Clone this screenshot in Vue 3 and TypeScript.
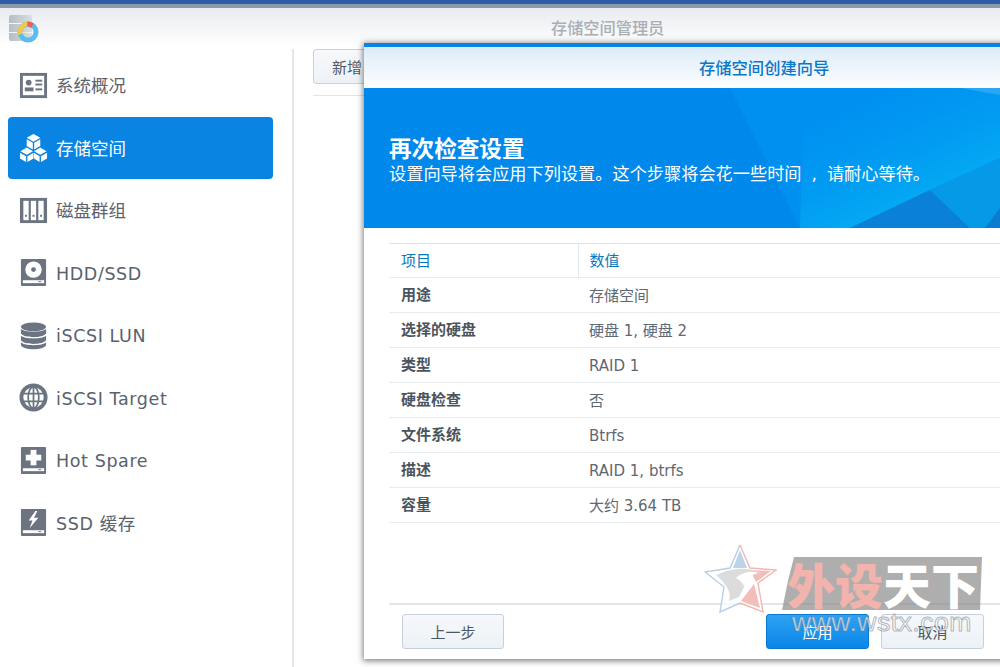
<script setup lang="ts">
const navItems: { label: string; icon: string; active?: boolean }[] = [
  { label: '系统概况', icon: 'card' },
  { label: '存储空间', icon: 'cubes', active: true },
  { label: '磁盘群组', icon: 'group' },
  { label: 'HDD/SSD', icon: 'disk' },
  { label: 'iSCSI LUN', icon: 'db' },
  { label: 'iSCSI Target', icon: 'globe' },
  { label: 'Hot Spare', icon: 'plus' },
  { label: 'SSD 缓存', icon: 'bolt' },
]
const rows: [string, string][] = [
  ['用途', '存储空间'],
  ['选择的硬盘', '硬盘 1, 硬盘 2'],
  ['类型', 'RAID 1'],
  ['硬盘检查', '否'],
  ['文件系统', 'Btrfs'],
  ['描述', 'RAID 1, btrfs'],
  ['容量', '大约 3.64 TB'],
]
const isLatin = (s: string): boolean => /[A-Za-z]/.test(s)
</script>

<template>
  <div class="page">
    <div class="topbar"></div>
    <header class="apphead">
      <svg class="applogo" width="30" height="30" viewBox="0 0 30 30">
        <defs>
          <linearGradient id="cyl" x1="0" y1="0" x2="1" y2="0">
            <stop offset="0" stop-color="#b4bfc4" />
            <stop offset="1" stop-color="#d8dee1" />
          </linearGradient>
        </defs>
        <rect x="0" y="1" width="23" height="26" rx="2" fill="url(#cyl)" />
        <rect x="0" y="9" width="23" height="1" fill="#f3f6f7" />
        <rect x="0" y="18" width="23" height="1" fill="#f3f6f7" />
        <circle cx="19" cy="18" r="8" fill="none" stroke="#5cbcf0" stroke-width="5" />
        <path d="M19 18 L9 21 A10.5 10.5 0 0 1 18 7.5 L18 12 A6 6 0 0 0 13.5 19 Z" fill="#f4c84a" />
        <path d="M18.5 7.5 A10.5 10.5 0 0 1 25 9.5 L22 14 A6 6 0 0 0 18.5 12.5 Z" fill="#e9605c" />
      </svg>
      <div class="apptitle">存储空间管理员</div>
    </header>
    <div class="body">
      <nav class="side">
        <div v-for="item in navItems" :key="item.label" class="item" :class="{ active: item.active }">
          <svg class="ico" width="30" height="30" viewBox="0 0 30 30">
            <g v-if="item.icon === 'card'">
              <rect x="1" y="2" width="28" height="26" fill="#6b7480" />
              <rect x="4" y="5" width="22" height="20" fill="#fff" />
              <circle cx="10" cy="12" r="3" fill="#6b7480" />
              <rect x="6" y="17" width="9" height="4" fill="#6b7480" />
              <rect x="17" y="9" width="7" height="2" fill="#6b7480" />
              <rect x="17" y="13" width="7" height="2" fill="#6b7480" />
              <rect x="17" y="18" width="7" height="2" fill="#6b7480" />
            </g>
            <g v-else-if="item.icon === 'cubes'" fill="#fff">
              <path d="M15 1 L22 5 L15 9 L8 5 Z" />
              <path d="M8 6.5 L14.3 10 V17 L8 13.5 Z" />
              <path d="M22 6.5 L15.7 10 V17 L22 13.5 Z" />
              <path d="M8 15 L14.5 19 L8 22.5 L1.5 19 Z" />
              <path d="M1 20.5 L7.3 24 V30 L1 26.5 Z" />
              <path d="M15 20.5 L8.7 24 V30 L15 26.5 Z" />
              <path d="M22 15 L28.5 19 L22 22.5 L15.5 19 Z" />
              <path d="M15.5 20.5 L21.3 24 V30 L15.5 26.5 Z" />
              <path d="M29 20.5 L22.7 24 V30 L29 26.5 Z" />
            </g>
            <g v-else-if="item.icon === 'group'">
              <rect x="1" y="2" width="28" height="26" fill="#6b7480" />
              <rect x="4.5" y="5" width="5.5" height="20" fill="#fff" />
              <rect x="12.2" y="5" width="5.5" height="20" fill="#fff" />
              <rect x="20" y="5" width="5.5" height="20" fill="#fff" />
              <rect x="6.2" y="19.5" width="2" height="2" fill="#6b7480" />
              <rect x="14" y="19.5" width="2" height="2" fill="#6b7480" />
              <rect x="21.8" y="19.5" width="2" height="2" fill="#6b7480" />
            </g>
            <g v-else-if="item.icon === 'disk'">
              <rect x="2" y="1" width="26" height="28" rx="1" fill="#6b7480" />
              <circle cx="15" cy="12" r="8.5" fill="#fff" />
              <circle cx="15" cy="12" r="2.5" fill="#6b7480" />
              <rect x="4" y="23" width="22" height="3" fill="#fff" />
              <rect x="20" y="24" width="3" height="1" fill="#6b7480" />
            </g>
            <g v-else-if="item.icon === 'db'" fill="#6b7480">
              <ellipse cx="15" cy="6" rx="13" ry="4.5" />
              <path d="M2 8 C5 12 25 12 28 8 V13 C25 18 5 18 2 13 Z" />
              <path d="M2 15 C5 19 25 19 28 15 V20 C25 25 5 25 2 20 Z" />
              <path d="M2 22 C5 26 25 26 28 22 V25 C25 30.5 5 30.5 2 25 Z" />
            </g>
            <g v-else-if="item.icon === 'globe'">
              <circle cx="15" cy="15" r="14.5" fill="#6b7480" />
              <circle cx="15" cy="15" r="10.5" fill="#fff" />
              <g fill="none" stroke="#6b7480" stroke-width="1.8">
                <ellipse cx="15" cy="15" rx="5.5" ry="11" />
                <path d="M15 4 V26 M4 11 H26 M4 19 H26" />
              </g>
            </g>
            <g v-else-if="item.icon === 'plus'">
              <rect x="2" y="1" width="26" height="28" rx="1" fill="#6b7480" />
              <rect x="12" y="4" width="6" height="16" fill="#fff" />
              <rect x="7" y="9" width="16" height="6" fill="#fff" />
              <rect x="4" y="23" width="22" height="3" fill="#fff" />
              <rect x="20" y="24" width="3" height="1" fill="#6b7480" />
            </g>
            <g v-else>
              <rect x="2" y="1" width="26" height="28" rx="1" fill="#6b7480" />
              <path d="M17 3 L10 13 H14 L11 21 L20 10 H15.5 L19 3 Z" fill="#fff" />
              <rect x="4" y="23" width="22" height="3" fill="#fff" />
              <rect x="20" y="24" width="3" height="1" fill="#6b7480" />
            </g>
          </svg>
          <span class="label" :class="{ latin: isLatin(item.label) }">{{ item.label }}</span>
        </div>
      </nav>
      <main class="content">
        <div class="toolbar">
          <button class="addbtn">新增</button>
        </div>
      </main>
    </div>

    <section class="dialog">
      <div class="dtitle">存储空间创建向导</div>
      <div class="banner">
        <svg class="bannerart" width="636" height="140" viewBox="0 0 636 140">
          <defs>
            <linearGradient id="glow" x1="0.2" y1="0" x2="0.75" y2="0.85">
              <stop offset="0" stop-color="#0098f2" stop-opacity="0" />
              <stop offset="1" stop-color="#05b0f4" />
            </linearGradient>
          </defs>
          <path d="M366 0 H636 V140 H436 Z" fill="#0090f0" />
          <path d="M440 0 H636 V70 L566 102 L486 140 H436 Z" fill="url(#glow)" />
          <path d="M486 140 L566 102 L606 140 Z" fill="#0a80d8" />
          <path d="M566 102 L636 70 V120 L621 140 H606 Z" fill="#0599e8" />
          <path d="M621 140 L636 120 V140 Z" fill="#0a7cd0" />
          <path d="M596 0 H636 V7 Z" fill="#2aa6f2" />
        </svg>
        <h1 class="btitle">再次检查设置</h1>
        <p class="bsub">设置向导将会应用下列设置。这个步骤将会花一些时间 , 请耐心等待。</p>
      </div>
      <div class="tablewrap">
        <table class="tbl">
          <thead>
            <tr><th class="c1">项目</th><th>数值</th></tr>
          </thead>
          <tbody>
            <tr v-for="r in rows" :key="r[0]">
              <td class="c1 key">{{ r[0] }}</td>
              <td class="val">{{ r[1] }}</td>
            </tr>
          </tbody>
        </table>
      </div>
      <footer class="dfoot">
        <button class="btn">上一步</button>
        <div class="right">
          <button class="btn primary">应用</button>
          <button class="btn">取消</button>
        </div>
      </footer>
    </section>

    <div class="watermark">
      <svg class="star" width="73" height="70" viewBox="0 0 73 70">
        <path d="M36 1 L46 24 L72 26 L54 39 L59 68 L36 59 L16 68 L20 43 L1 28 L26 24 Z" fill="rgba(255,255,255,.65)" />
        <path d="M36 6 L43 24 H29 Z" fill="#bcd3ea" />
        <path d="M46 26 L67 27 L52 38 Z" fill="#f3bdb9" />
        <path d="M50 40 L56 64 L37 57 Z" fill="#f3bdb9" />
        <path d="M36 1 L26 24 L1 28 L20 43 L16 68 L36 59" fill="none" stroke="#b8cfe6" stroke-width="1.4" />
        <path d="M36 1 L46 24 L72 26 L54 39 L59 68 L36 59" fill="none" stroke="#f0b8b3" stroke-width="1.4" />
        <path d="M12 31 C26 24 44 22 57 29 C47 29 41 36 40 43 L35 53 L25 57 C28 48 22 40 12 31 Z" fill="#dcdcdc" />
        <path d="M32 34 C38 28 48 27 54 29 C46 31 42 36 40 42 C38 38 36 36 32 34 Z" fill="#fff" />
      </svg>
      <div class="wmtext">
        <div class="wmcn"><span class="wmred">外设</span><span class="wmwhite">天下</span></div>
        <div class="wmurl">www.wstx.com</div>
      </div>
    </div>
  </div>
</template>

<style>
html, body { margin: 0; background: #fff; }
</style>

<style scoped>
.page {
  position: relative;
  width: 1000px;
  height: 667px;
  overflow: hidden;
  background: #fff;
  font-family: "DejaVu Sans", "Noto Sans CJK SC", sans-serif;
}
.topbar {
  height: 4px;
  background: #2f5bab;
  border-bottom: 4px solid #8c99a9;
}
.apphead {
  position: relative;
  height: 36px;
  background: linear-gradient(#e8ebef, #fdfdfe);
  display: flex;
  align-items: center;
  padding-left: 9px;
}
.applogo { flex: none; margin-top: 5px; }
.apptitle {
  flex: 1;
  padding-left: 512px;
  padding-top: 2px;
  font-size: 16.2px;
  font-weight: 500;
  color: #a9afb5;
  font-family: "Noto Sans CJK SC", sans-serif;
}
.body { display: flex; height: 623px; }
.side {
  width: 294px;
  flex: none;
  box-sizing: border-box;
  margin-top: 5px;
  padding: 5px 19px 0 8px;
  border-right: 2px solid #e6e7e9;
}
.item {
  height: 62.5px;
  display: flex;
  align-items: center;
  padding-left: 11px;
  box-sizing: border-box;
  color: #59626d;
  border-radius: 4px;
}
.item.active { background: #0a84e2; color: #fff; }
.ico { flex: none; width: 29px; height: 29px; }
.label {
  margin-left: 8px;
  padding-top: 2px;
  font-size: 17.5px;
  line-height: 24px;
  white-space: nowrap;
}
.label.latin { letter-spacing: .6px; }
.content { flex: 1; padding: 5px 0 0 19px; }
.toolbar {
  height: 46px;
  border-bottom: 1px solid #dfe5ec;
}
.addbtn {
  width: 100px;
  height: 35px;
  box-sizing: border-box;
  border: 1px solid #c8d2de;
  border-radius: 3px;
  background: linear-gradient(#f7f9fb, #eef2f7);
  font: 15px "Noto Sans CJK SC", sans-serif;
  color: #505a64;
  text-align: left;
  padding-left: 18px;
}
.dialog {
  position: absolute;
  left: 364px;
  top: 43px;
  width: 660px;
  height: 616px;
  box-sizing: border-box;
  background: #fff;
  border-top: 4px solid #0a84e2;
  box-shadow: 0 1px 6px 1px rgba(0, 0, 0, .5);
  display: flex;
  flex-direction: column;
}
.dtitle {
  height: 41px;
  flex: none;
  background: linear-gradient(#dcecf8, #fdfeff);
  color: #0a78c8;
  font: 500 16.3px/41px "Noto Sans CJK SC", sans-serif;
  padding-left: 335px;
}
.banner {
  position: relative;
  height: 140px;
  flex: none;
  box-sizing: border-box;
  background: #0088ea;
  padding: 45px 0 0 25px;
  overflow: hidden;
  color: #fff;
}
.bannerart { position: absolute; left: 0; top: 0; }
.btitle {
  position: relative;
  margin: 0;
  font: 700 22.6px/30px "Noto Sans CJK SC", sans-serif;
}
.bsub {
  position: relative;
  margin: -1px 0 0;
  font: 400 17.2px/24px "DejaVu Sans", "Noto Sans CJK SC", sans-serif;
  word-spacing: 4.5px;
  white-space: nowrap;
}
.tablewrap { flex: 1; padding: 15px 0 0 25px; }
.tbl {
  width: 100%;
  border-collapse: collapse;
  border-top: 1px solid #dbe2ea;
  table-layout: fixed;
}
.tbl th, .tbl td {
  box-sizing: border-box;
  padding: 0 0 2px 11px;
  text-align: left;
  font-size: 15px;
  line-height: 20px;
  border-bottom: 1px solid #e6ebf0;
}
.tbl th {
  height: 34px;
  font-weight: 400;
  color: #0a78bc;
  font-family: "Noto Sans CJK SC", sans-serif;
}
.tbl .c1 { width: 189px; padding-left: 12px; }
.tbl th.c1 { border-right: 1px solid #e0e8f0; }
.tbl td { height: 35px; }
.tbl td.val { padding: 2px 0 0 11px; color: #5f6872; }
.key { font-weight: 700; color: #4a545e; font-family: "Noto Sans CJK SC", sans-serif; }
.dfoot {
  position: relative;
  height: 56px;
  flex: none;
  box-sizing: border-box;
  margin-left: 25px;
  border-top: 2px solid #e3e5e7;
  display: flex;
  align-items: flex-start;
  padding: 9px 40px 0 13px;
  justify-content: space-between;
}
.right { display: flex; gap: 12px; }
.btn {
  width: 102px;
  height: 35px;
  box-sizing: border-box;
  border: 1px solid #c6d0dc;
  border-radius: 3px;
  background: linear-gradient(#f6f8fb, #edf1f6);
  font: 15px "Noto Sans CJK SC", sans-serif;
  color: #4e5863;
}
.right .btn { width: 103px; }
.btn.primary {
  border-color: #0a78cf;
  background: linear-gradient(#2ea2f4, #0a86e6);
  color: #fff;
}
.watermark {
  position: absolute;
  left: 704px;
  top: 544px;
  display: flex;
  pointer-events: none;
}
.star { flex: none; }
.wmtext { position: relative; margin-left: 5px; }
.wmcn {
  width: 200px;
  height: 53px;
  margin-top: 13px;
  padding-left: 5px;
  background: rgba(130, 130, 130, .65);
  clip-path: polygon(6% 0, 100% 0, 99% 100%, 0 100%, 3% 45%);
  font: 900 48px/52px "Noto Sans CJK SC", sans-serif;
  white-space: nowrap;
  box-sizing: border-box;
}
.wmred { color: #f2b3ad; }
.wmwhite { color: #fff; }
.wmurl {
  position: absolute;
  left: 10px;
  top: 63px;
  font: 400 26.5px/30px "Liberation Sans", sans-serif;
  color: rgba(255, 255, 255, .7);
  -webkit-text-stroke: 1px rgba(110, 125, 140, .55);
  letter-spacing: .5px;
  white-space: nowrap;
}
</style>
